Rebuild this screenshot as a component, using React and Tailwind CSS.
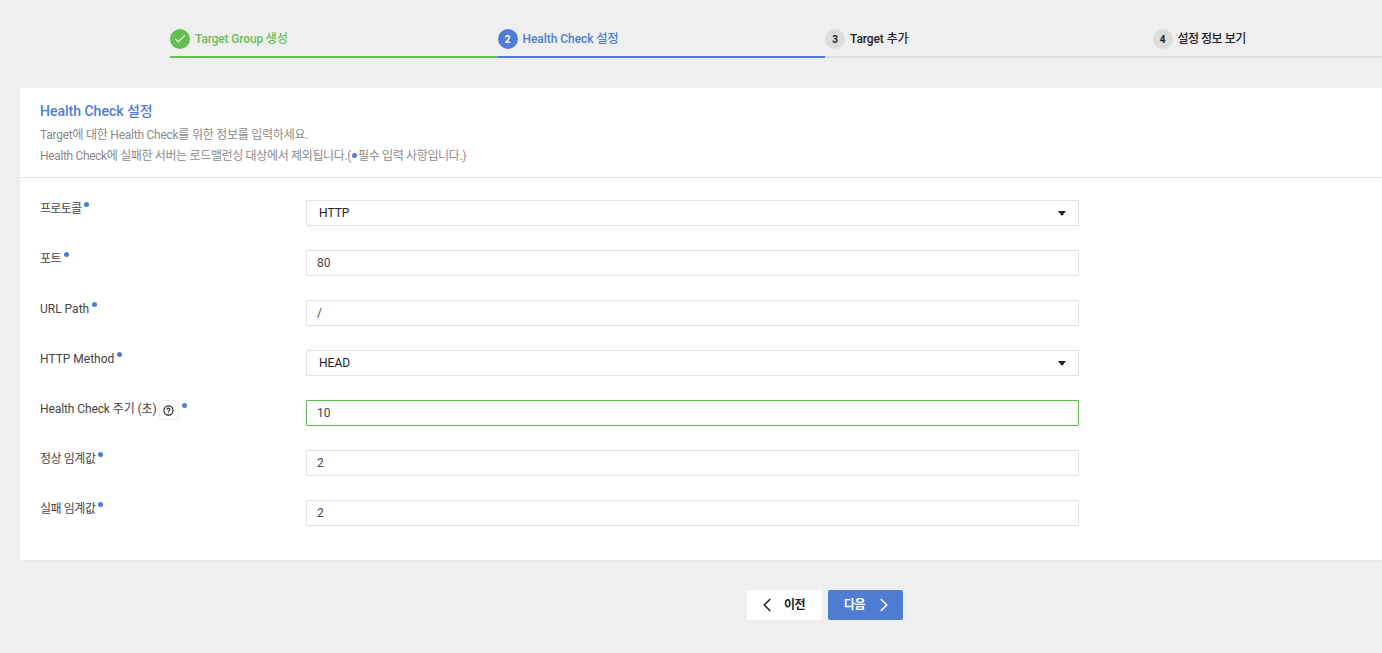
import React from 'react';
import { Check, ChevronLeft, ChevronRight, CircleHelp } from 'lucide-react';

const steps = [
  { no: 1, label: 'Target Group 생성', state: 'done', tracking: 'tracking-[-0.15px]' },
  { no: 2, label: 'Health Check 설정', state: 'active', tracking: 'tracking-[-0.05px]' },
  { no: 3, label: 'Target 추가', state: 'todo', tracking: 'tracking-[-0.1px]' },
  { no: 4, label: '설정 정보 보기', state: 'todo', tracking: 'tracking-[-0.5px]' },
];

const fields = [
  { label: '프로토콜', value: 'HTTP', select: true, tracking: 'tracking-[-0.7px]' },
  { label: '포트', value: '80', tracking: 'tracking-[-0.6px]' },
  { label: 'URL Path', value: '/' },
  { label: 'HTTP Method', value: 'HEAD', select: true },
  { label: 'Health Check 주기 (초)', value: '10', help: true, focused: true, tracking: 'tracking-[-0.1px]' },
  { label: '정상 임계값', value: '2', tracking: 'tracking-[-0.45px]' },
  { label: '실패 임계값', value: '2', tracking: 'tracking-[-0.45px]' },
];

const Dot = ({ className = '' }) => (
  <span className={`inline-block w-[5px] h-[5px] rounded-full bg-[#4e7dd3] ${className}`} />
);

const Step = ({ no, label, state, tracking }) => {
  const line = { done: 'border-[#63bf4f]', active: 'border-[#4e7dd3]', todo: 'border-[#dcdcdc]' }[state];
  const circle = {
    done: 'bg-[#63bf4f] text-white',
    active: 'bg-[#4e7dd3] text-white',
    todo: 'bg-[#dcdcdc] text-[#222222]',
  }[state];
  const text = { done: 'text-[#6cc05a]', active: 'text-[#4e7dd3]', todo: 'text-[#222222]' }[state];

  return (
    <div className={`w-[327.5px] shrink-0 h-[29px] border-b-2 ${line}`}>
      <div className="flex items-center gap-[5px]">
        <div className={`w-5 h-5 rounded-full flex items-center justify-center text-[10px] font-bold ${circle}`}>
          {state === 'done' ? <Check className="w-[14px] h-[14px]" strokeWidth={1.75} /> : no}
        </div>
        <span className={`text-xs font-medium ${text} ${tracking}`}>{label}</span>
      </div>
    </div>
  );
};

const Field = ({ label, value, select, help, focused, tracking = '' }) => (
  <div className="flex h-[26px] mb-6 last:mb-0">
    <div className="w-[266px] shrink-0 flex items-start text-xs text-[#444444] leading-[18px]">
      <span className={tracking}>{label}</span>
      {help && (
        <span className="ml-[2px] w-5 h-5 rounded-[2px] border border-[#eeeeee] flex items-center justify-center shrink-0">
          <CircleHelp className="w-[11px] h-[11px] text-[#222222]" strokeWidth={2.5} />
        </span>
      )}
      <Dot className={help ? 'ml-[3px] mt-[3px]' : 'ml-[3px] mt-[2px]'} />
    </div>
    <div
      className={`w-[773px] h-[26px] shrink-0 flex items-center justify-between pr-3 text-xs rounded-[1px] border ${
        focused ? 'border-[#63bf4f]' : 'border-[#e0e0e0]'
      } ${select ? 'pl-3 text-[#222222]' : 'pl-[10px] text-[#444444]'}`}
    >
      <span>{value}</span>
      {select && <span className="w-0 h-0 border-x-[4px] border-x-transparent border-t-[5px] border-t-[#222222]" />}
    </div>
  </div>
);

export default function App() {
  return (
    <div
      className="h-[653px] overflow-hidden bg-[#efefef]"
      style={{ fontFamily: 'Roboto, "Noto Sans CJK KR", sans-serif' }}
    >
      <div className="flex pl-[170px] pt-[29px]">
        {steps.map((step) => (
          <Step key={step.no} {...step} />
        ))}
      </div>

      <div className="ml-5 mt-[30px] h-[473px] bg-white rounded-l-[3px] border-b border-[#e8e8e8]">
        <div className="h-[90px] px-5 pt-[14px] border-b border-[#e4e4e4]">
          <h2 className="text-sm leading-[18px] font-medium text-[#4e7dd3]">Health Check 설정</h2>
          <p className="mt-[5px] text-xs leading-[21px] text-[#8a8a8a] tracking-[-0.25px]">
            Target에 대한 Health Check를 위한 정보를 입력하세요.
          </p>
          <p className="text-xs leading-[21px] text-[#8a8a8a] flex items-center tracking-[-0.35px]">
            Health Check에 실패한 서버는 로드밸런싱 대상에서 제외됩니다.(
            <Dot className="mx-[1px] mb-[3px]" />
            필수 입력 사항입니다.)
          </p>
        </div>
        <div className="pl-5 pt-[22px]">
          {fields.map((field) => (
            <Field key={field.label} {...field} />
          ))}
        </div>
      </div>

      <div className="flex justify-center gap-[6px] mt-[29px] pl-[268px]">
        <button className="w-[75px] h-[30px] rounded-[2px] bg-white flex items-center pl-[9px] gap-[6px] text-xs font-bold text-[#222222] tracking-[-0.5px]">
          <ChevronLeft className="w-[22px] h-[22px]" strokeWidth={1.8} />
          이전
        </button>
        <button className="w-[75px] h-[30px] rounded-[2px] bg-[#4e7dd3] flex items-center pl-4 gap-[8px] text-xs font-bold text-white tracking-[-0.5px]">
          다음
          <ChevronRight className="w-[22px] h-[22px]" strokeWidth={1.8} />
        </button>
      </div>
    </div>
  );
}
